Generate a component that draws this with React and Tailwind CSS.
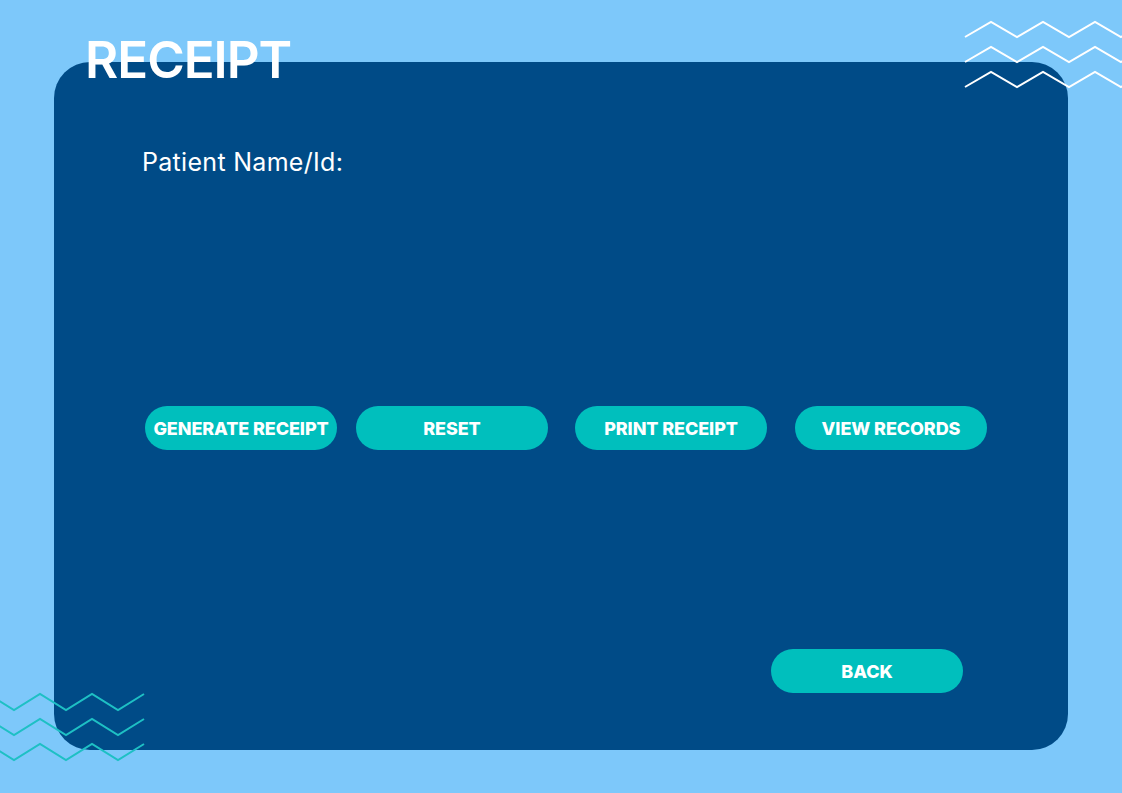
const buttons = [
  { label: "GENERATE RECEIPT", cls: "" },
  { label: "RESET", cls: "ml-[19px]" },
  { label: "PRINT RECEIPT", cls: "ml-[27px]" },
  { label: "VIEW RECORDS", cls: "ml-[28px]" },
];

function Zigzag({ className, color, rows, count, amp, x0, down }) {
  const lines = [];
  for (let r = 0; r < rows; r++) {
    const pts = [];
    for (let i = 0; i < count; i++) {
      const x = x0 + i * 26;
      const low = down ? i % 2 === 0 : i % 2 === 1;
      const y = 2 + r * 25 + (low ? amp : 0);
      pts.push(`${x},${y}`);
    }
    lines.push(<polyline key={r} points={pts.join(" ")} fill="none" stroke={color} strokeWidth="2" />);
  }
  return <svg className={className} width="180" height="72" viewBox="0 0 180 72">{lines}</svg>;
}

function PillButton({ label, className = "" }) {
  return (
    <button className={`h-[44px] w-[192px] rounded-full bg-[#00bfbd] text-[18px] font-extrabold tracking-[-0.1px] text-white ${className}`}>
      {label}
    </button>
  );
}

export default function App() {
  return (
    <div className="relative h-[793px] w-[1122px] overflow-hidden bg-[#7dc8fa] font-['Inter',sans-serif]">
      <div className="ml-[54px] mt-[62px] flex h-[688px] w-[1014px] flex-col rounded-[36px] bg-[#004b87] pl-[88px] pt-[88px]">
        <div className="text-[25px] leading-none tracking-[0.3px] text-white">Patient Name/Id:</div>
        <div className="mt-[231px] flex pl-[3px]">
          {buttons.map((b) => (
            <PillButton key={b.label} label={b.label} className={b.cls} />
          ))}
        </div>
        <div className="mt-[199px] flex pl-[629px]">
          <PillButton label="BACK" />
        </div>
      </div>

      <h1 className="absolute left-[85px] top-[34px] text-[51px] font-semibold leading-none tracking-[-1px] text-white">RECEIPT</h1>

      <Zigzag className="absolute left-[964px] top-[20px]" color="#ffffff" rows={3} count={8} amp={15} x0={1} down />
      <Zigzag className="absolute left-[-12px] top-[692px]" color="#1ec0c4" rows={3} count={7} amp={16} x0={0} down={false} />
    </div>
  );
}
